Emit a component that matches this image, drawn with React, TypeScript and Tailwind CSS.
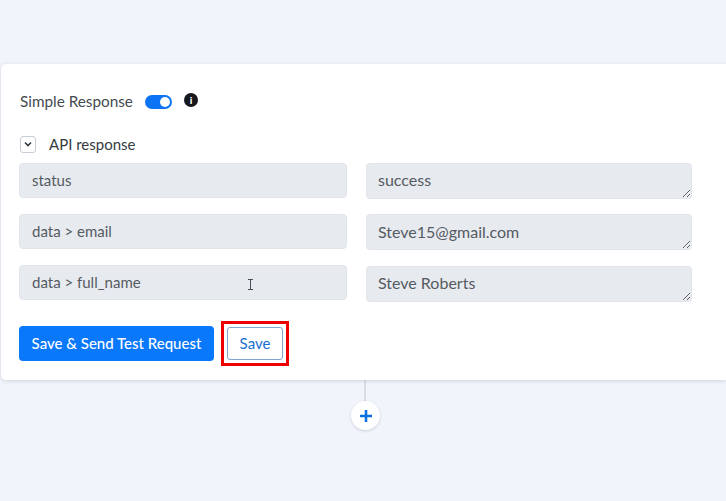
const rows = [
  { key: "status", value: "success", pad: "pt-[5px]" },
  { key: "data > email", value: "Steve15@gmail.com", pad: "pt-[6px]" },
  { key: "data > full_name", value: "Steve Roberts", pad: "mt-px pt-[5px]" },
];

export default function App() {
  return (
    <div className="h-[501px] w-[726px] overflow-hidden bg-[#f1f4fb] pt-16 font-['Lato',sans-serif] text-[#495057]">
      <div className="relative ml-px h-[316px] rounded-l-[5px] bg-white pl-[18px] pt-[27px] shadow-[0_1px_4px_rgba(60,70,90,0.18)]">
        <div className="flex h-5 items-center">
          <span className="ml-px text-[15.3px] text-[#444a50]">Simple Response</span>
          <span className="ml-[12px] mt-px flex h-[14px] w-[27px] items-center justify-end rounded-full bg-[#0d73f5] pr-[2px]">
            <span className="h-[10px] w-[10px] rounded-full bg-white" />
          </span>
          <span className="ml-[12px] mb-[2px] flex h-[14px] w-[14px] items-center justify-center rounded-full bg-[#16181d]">
            <span className="text-[10px] font-black leading-none text-white">i</span>
          </span>
        </div>

        <div className="mt-[24px] flex h-[18px] items-center">
          <span className="ml-px flex h-[17px] w-[16px] items-center justify-center rounded-[3px] border border-[#c9ced6] bg-white">
            <svg viewBox="0 0 10 10" className="h-[10px] w-[10px]" fill="none" stroke="#343a40" strokeWidth="1.6">
              <path d="M2 3.5 5 6.5 8 3.5" />
            </svg>
          </span>
          <span className="ml-[13px] text-[15px] text-[#343a40]">API response</span>
        </div>

        <div className="mt-[10px] flex flex-col gap-[15px]">
          {rows.map((row) => (
            <div key={row.key} className="flex items-start gap-[19px]">
              <input
                readOnly
                value={row.key}
                className="h-[35px] w-[328px] rounded-[4px] border border-[#e1e4e9] bg-[#e7eaee] px-[12px] pb-[2px] text-[15px] text-[#555b63] outline-none"
              />
              <textarea
                readOnly
                value={row.value}
                className={`h-[36px] w-[326px] rounded-[4px] border border-[#e1e4e9] bg-[#e7eaee] px-[11px] text-[16px] leading-[22px] text-[#555b63] outline-none ${row.pad}`}
              />
            </div>
          ))}
        </div>

        {/* text cursor caught in the capture */}
        <svg viewBox="0 0 7 11" className="absolute left-[246px] top-[215px] h-[11px] w-[7px]" fill="none" stroke="#4a4f55" strokeWidth="1">
          <path d="M1 .5h5M3.5.5v10M1 10.5h5" />
        </svg>

        <div className="mt-[19px] flex items-center">
          <button type="button" className="h-[35px] w-[195px] rounded-[4px] bg-[#0a78fa] text-[15px] font-medium text-white">
            Save &amp; Send Test Request
          </button>
          <span className="ml-[7px] border-[3px] border-[#ee0000] p-[3px]">
            <button type="button" className="block h-[33px] w-[56px] rounded-[3px] border border-[#7fa8d0] bg-white text-[15px] text-[#1a6fd0]">
              Save
            </button>
          </span>
        </div>
      </div>

      <div className="ml-[364px] h-[21px] w-[2px] bg-[#d9dde3]" />
      <div className="ml-[351px] flex h-[29px] w-[29px] items-center justify-center rounded-full bg-white shadow-[0_1px_3px_rgba(60,70,90,0.2)]">
        <svg viewBox="0 0 14 14" className="h-[14px] w-[14px]" stroke="#0b6fe0" strokeWidth="2.6">
          <path d="M7 1v12M1 7h12" />
        </svg>
      </div>
    </div>
  );
}
